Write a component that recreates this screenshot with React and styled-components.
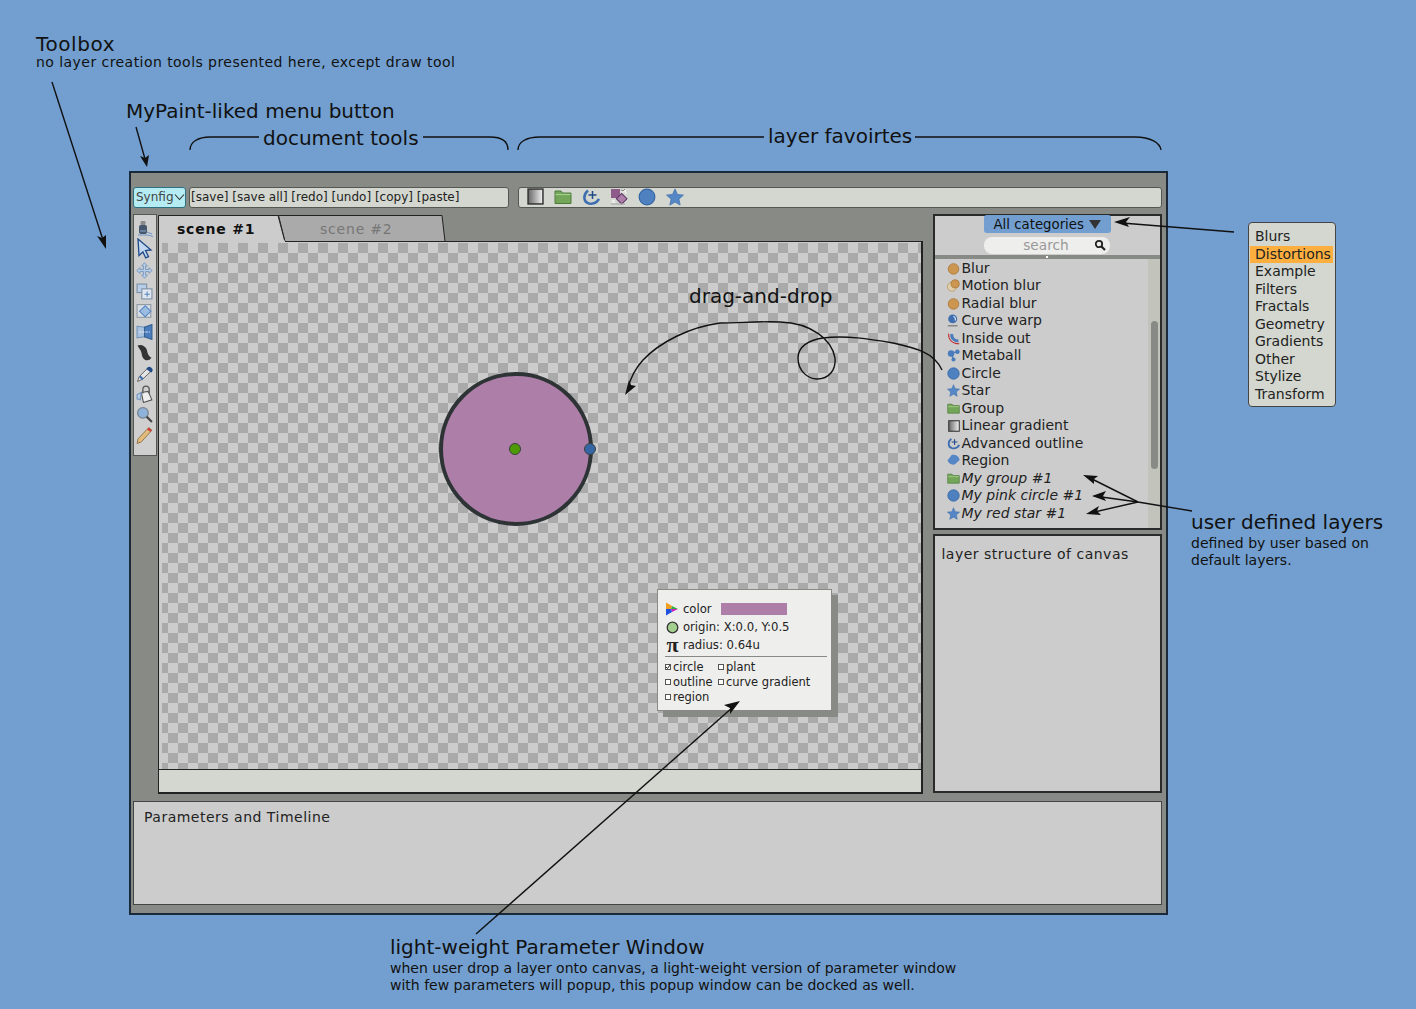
import React from 'react';
import styled, { createGlobalStyle } from 'styled-components';

const GlobalStyle = createGlobalStyle`
  html, body { margin: 0; padding: 0; background: #729fcf; }
  body { font-family: "DejaVu Sans", sans-serif; color: #111; }
  * { box-sizing: border-box; }
`;

const Page = styled.div`
  position: relative;
  width: 1416px;
  height: 1009px;
  padding: 171px 0 0 129px;
  background: #729fcf;
  overflow: hidden;
`;

const AppWindow = styled.div`
  width: 1039px;
  height: 744px;
  border: 2px solid #1a2a3a;
  background: #888a85;
  padding: 14px 4px 8px 2px;
  display: flex;
  flex-direction: column;
`;

const TopBar = styled.div`
  display: flex;
  height: 22px;
`;

const MenuButton = styled.div`
  width: 53px;
  height: 21px;
  border: 1px solid #2e6f80;
  border-radius: 3px;
  background: #b5ebf3;
  color: #444;
  font-size: 12px;
  display: flex;
  align-items: center;
  padding: 0 0 2px 2px;
  margin-right: 3px;
`;

const ToolStrip = styled.div`
  height: 21px;
  border: 1px solid #555753;
  border-radius: 3px;
  background: #d3d7cf;
  display: flex;
  align-items: center;
  width: ${p => p.$w}px;
  margin-right: ${p => p.$mr || 0}px;
  padding-left: ${p => p.$pl || 0}px;
  padding-bottom: 2px;
  gap: ${p => p.$gap || 0}px;
  font-size: 12px;
  color: #222;
`;

const FavSlot = styled.span`
  width: 18px;
  height: 18px;
  display: flex;
  align-items: center;
  justify-content: center;
`;

const Middle = styled.div`
  display: flex;
  margin-top: 5px;
  height: 580px;
`;

const ToolBox = styled.div`
  width: 24px;
  height: 242px;
  border: 1px solid #555753;
  background: #cfcfcf;
  display: flex;
  flex-direction: column;
  align-items: center;
  padding-top: 6px;
`;

const ToolSlot = styled.span`
  width: 18px;
  height: ${p => p.$h || 20.6}px;
  flex: none;
  display: flex;
  align-items: center;
  justify-content: center;
`;

const CanvasColumn = styled.div`
  width: 767px;
  margin-left: 1px;
  display: flex;
  flex-direction: column;
`;

const TabRow = styled.div`
  position: relative;
  height: 27px;
  margin-top: 1px;
  flex: none;
  z-index: 2;
`;

const TabShape = styled.svg`
  position: absolute;
  left: 0;
  top: 0;
`;

const TabLabel = styled.span`
  position: absolute;
  top: 6px;
  left: ${p => p.$left}px;
  font-size: 14px;
  letter-spacing: 0.8px;
  font-weight: ${p => (p.$active ? 700 : 400)};
  color: ${p => (p.$active ? '#111' : '#777')};
`;

const CanvasFrame = styled.div`
  position: relative;
  height: 529px;
  border: 1px solid #222;
  border-right-width: 2px;
  border-bottom: none;
  margin-top: -1px;
  background-color: #cccccc;
`;

const Checker = styled.div`
  position: absolute;
  left: 3px;
  top: 1px;
  right: 0;
  bottom: 0;
  background-color: #cccccc;
  background-image: conic-gradient(#aaaaaa 25%, #cccccc 0 50%, #aaaaaa 0 75%, #cccccc 0);
  background-size: 20px 20px;
  background-position: 6px 0;
`;

const Circle = styled.div`
  position: absolute;
  left: 280px;
  top: 130px;
  width: 154px;
  height: 154px;
  border-radius: 50%;
  background: #ad7fa8;
  border: 4.5px solid #2e3436;
`;

const Handle = styled.div`
  position: absolute;
  left: ${p => p.$left}px;
  top: 201px;
  width: 12px;
  height: 12px;
  border-radius: 50%;
  border: 1px solid #3a4040;
  background: ${p => p.$color};
`;

const Popup = styled.div`
  position: absolute;
  left: 498px;
  top: 347px;
  width: 175px;
  height: 122px;
  background: #eeeeec;
  border: 1px solid #888a85;
  box-shadow: 6px 6px 0 #888a85;
  padding: 10px 6px 0 7px;
  font-size: 11.65px;
  color: #222;
`;

const PopRow = styled.div`
  display: flex;
  align-items: center;
  height: 18px;
  gap: 3px;
`;

const PopIcon = styled.span`
  width: 15px;
  display: flex;
  justify-content: center;
  align-items: center;
  font-family: "Liberation Serif", serif;
  font-size: 22px;
  font-weight: 700;
  line-height: 1;
`;

const Swatch = styled.span`
  width: 66px;
  height: 12px;
  margin-left: 6px;
  background: #ad7fa8;
`;

const PopRule = styled.div`
  height: 1px;
  background: #888a85;
  margin: 2px 0 3px;
  width: 162px;
`;

const CheckGrid = styled.div`
  display: grid;
  grid-template-columns: 53px 1fr;
  grid-auto-rows: 14.7px;
  font-size: 11.5px;
`;

const CheckItem = styled.span`
  display: flex;
  align-items: center;
  white-space: nowrap;
`;

const CheckBox = styled.span`
  width: 6px;
  height: 6px;
  border: 1px solid #555;
  margin-right: 2px;
  background: #fff;
  flex: none;
  display: flex;
`;

const StatusBar = styled.div`
  height: 25px;
  flex: none;
  border: 1px solid #222;
  border-right-width: 2px;
  border-bottom-width: 2px;
  background: #d3d7cf;
`;

const SidePanels = styled.div`
  width: 229px;
  margin-left: 10px;
  display: flex;
  flex-direction: column;
  gap: 4px;
`;

const LayerPanel = styled.div`
  height: 316px;
  border: 2px solid #2a2a2a;
  background: #cccccc;
  display: flex;
  flex-direction: column;
  align-items: center;
  position: relative;
`;

const CategoryButton = styled.div`
  width: 127px;
  height: 18px;
  margin: -1px 1px 0 0;
  border-radius: 3px;
  background: #729fcf;
  font-size: 13.3px;
  display: flex;
  align-items: center;
  justify-content: center;
  gap: 5px;
  color: #111;
  flex: none;
`;

const Triangle = styled.span`
  width: 0;
  height: 0;
  border-left: 6px solid transparent;
  border-right: 6px solid transparent;
  border-top: 9px solid #333;
`;

const SearchBox = styled.div`
  width: 126px;
  height: 17px;
  margin: 4px 1px 0 0;
  border-radius: 8px;
  background: #eeeeec;
  color: #999;
  font-size: 13.7px;
  padding: 0 4px 1px 39px;
  display: flex;
  align-items: center;
  justify-content: space-between;
  flex: none;
`;

const Divider = styled.div`
  align-self: stretch;
  height: 4px;
  margin-top: 1px;
  background: #888a85;
  position: relative;
  flex: none;
  &::after {
    content: '';
    position: absolute;
    left: 111px;
    top: 1px;
    width: 2px;
    height: 2px;
    background: #fff;
  }
`;

const ListArea = styled.div`
  align-self: stretch;
  flex: 1;
  display: flex;
  min-height: 0;
`;

const LayerList = styled.ul`
  list-style: none;
  margin: 0;
  padding: 0 0 0 12px;
  flex: 1;
`;

const LayerItem = styled.li`
  height: 17.5px;
  display: flex;
  align-items: center;
  font-size: 14px;
  color: #222;
  font-style: ${p => (p.$custom ? 'italic' : 'normal')};
  white-space: nowrap;
`;

const LayerIcon = styled.span`
  width: 13px;
  margin-right: 1px;
  display: flex;
  justify-content: center;
  flex: none;
  padding-top: 1px;
`;

const ScrollTrack = styled.div`
  width: 12px;
  background: #c2c4bc;
  padding: 62px 2px 0 3px;
`;

const ScrollThumb = styled.div`
  width: 7px;
  height: 148px;
  border-radius: 4px;
  background: #888a85;
`;

const StructurePanel = styled.div`
  height: 259px;
  border: 2px solid #2a2a2a;
  background: #cccccc;
  padding: 10px 6px;
  font-size: 14px;
  letter-spacing: 0.5px;
  color: #222;
`;

const BottomPanel = styled.div`
  height: 104px;
  margin-top: 7px;
  width: 1029px;
  border: 1px solid #444;
  background: #cccccc;
  padding: 7px 10px;
  font-size: 14px;
  letter-spacing: 0.5px;
  color: #222;
`;

const Note = styled.div`
  position: absolute;
  left: ${p => p.$x}px;
  top: ${p => p.$y}px;
  font-size: ${p => p.$size}px;
  line-height: ${p => p.$lh || 1.2};
  letter-spacing: ${p => p.$ls || 0}px;
  color: #111;
  white-space: nowrap;
  z-index: 4;
`;

const CategoryMenu = styled.div`
  position: absolute;
  left: 1248px;
  top: 222px;
  width: 88px;
  height: 185px;
  border: 1px solid #444;
  border-radius: 4px;
  background: #d3d7cf;
  padding: 5px 2px 0 1px;
  font-size: 14px;
  color: #222;
`;

const CategoryRow = styled.div`
  height: 17.5px;
  line-height: 17px;
  padding-left: 5px;
  background: ${p => (p.$on ? '#fcaf3e' : 'transparent')};
`;

const ArrowLayer = styled.svg`
  position: absolute;
  left: 0;
  top: 0;
  z-index: 5;
  pointer-events: none;
`;

const Arrow = ({ d, head }) => (
  <g>
    <path d={d} fill="none" stroke="#111" strokeWidth="1.4" />
    {head && <path d={head} fill="#111" />}
  </g>
);

const Disc = ({ s = 13 }) => (
  <svg width={s} height={s} viewBox="0 0 16 16">
    <circle cx="8" cy="8" r="7" fill="#4f80bf" stroke="#3465a4" strokeWidth="1" />
  </svg>
);

const Orange = ({ double }) => (
  <svg width="13" height="13" viewBox="0 0 16 16">
    {double && <circle cx="6" cy="9.500" r="5.500" fill="#e0cfae" stroke="#b8955f" />}
    <circle cx={double ? 10 : 8} cy={double ? 6 : 8.500} r={double ? 5 : 6.500} fill="#cc9550" stroke="#a87a3a" />
  </svg>
);

const Star = ({ s = 13 }) => (
  <svg width={s} height={s} viewBox="0 0 16 16">
    <path d="M8 .8l2.200 4.900 5.300.6-4 3.600 1.100 5.300L8 12.500l-4.600 2.700 1.100-5.300-4-3.600 5.300-.6z" fill="#5586c6" stroke="#3a6ca8" strokeWidth=".6" />
  </svg>
);

const Folder = ({ w = 13, h = 11 }) => (
  <svg width={w} height={h} viewBox="0 0 18 15">
    <path d="M1 1.500h6l1.500 2H17v10.500H1z" fill="#73a658" stroke="#4e7a3c" />
    <path d="M1.500 5h15" stroke="#a3d08a" strokeWidth="1.200" />
  </svg>
);

const Gradient = ({ s = 12, id }) => (
  <svg width={s} height={s} viewBox="0 0 16 16">
    <defs>
      <linearGradient id={id}>
        <stop offset="0" stopColor="#666" />
        <stop offset="1" stopColor="#f4f4f4" />
      </linearGradient>
    </defs>
    <rect x="1" y="1" width="14" height="14" fill={`url(#${id})`} stroke="#333" strokeWidth="1.400" />
  </svg>
);

const Outline = ({ s = 13 }) => (
  <svg width={s} height={s} viewBox="0 0 18 18">
    <path d="M6 2.500C1 6.500 1 14 7 15.500c4 .8 8-1 10-4.500" fill="none" stroke="#3f6fb0" strokeWidth="2.600" />
    <path d="M10.500 3v8M6.500 7h8" stroke="#204a87" strokeWidth="1.500" />
  </svg>
);

const Warp = () => (
  <svg width="13" height="13" viewBox="0 0 16 16">
    <circle cx="7" cy="6" r="5.500" fill="#3f6fb0" />
    <path d="M8 3c2 1 3 3 2 5" stroke="#cfe0f4" strokeWidth="1.600" fill="none" />
    <path d="M1 14.500h12" stroke="#777" strokeWidth="1.500" />
  </svg>
);

const InsideOut = () => (
  <svg width="13" height="13" viewBox="0 0 16 16">
    <path d="M2 2c-.5 7 4 12.500 13 12.500" fill="none" stroke="#c03030" strokeWidth="1.300" />
    <path d="M6 2.500c-1 5 3 8.500 8 8.500" fill="none" stroke="#4a7cbd" strokeWidth="3.600" />
  </svg>
);

const Metaball = () => (
  <svg width="13" height="13" viewBox="0 0 16 16">
    <circle cx="5" cy="5.500" r="4" fill="#4a7cbd" />
    <circle cx="12.800" cy="3.500" r="2.800" fill="#4a7cbd" />
    <circle cx="8" cy="13" r="2.500" fill="#4a7cbd" />
    <path d="M5 5l7.500-1.500M5 5l3 8" stroke="#4a7cbd" strokeWidth="1.800" />
  </svg>
);

const Region = () => (
  <svg width="13" height="13" viewBox="0 0 16 16">
    <path d="M.5 8L6 1c5-.5 9 2 9.500 6.500l-6 5.500C5 14 2 11 .5 8z" fill="#5586c6" />
  </svg>
);

const Transform = () => (
  <svg width="18" height="18" viewBox="0 0 18 18">
    <rect x="1" y="1" width="9" height="9" fill="#8d5a8a" />
    <rect x="8" y="7" width="7.500" height="7.500" fill="#ad7fa8" stroke="#5c3566" transform="rotate(45 11.700 10.700)" />
    <path d="M11 3l2 1 2-2 1 4M2 12l3 3M2 15l3-3" fill="none" stroke="#eeeeec" strokeWidth="1.500" />
    <path d="M11 2l2 1 2-2" fill="none" stroke="#666" strokeWidth=".8" />
    <path d="M1 16h14" stroke="#aaa" strokeWidth="1.200" />
  </svg>
);

const Tool = {
  ink: (
    <svg width="18" height="18" viewBox="0 0 18 18">
      <rect x="3" y="5" width="8" height="9" rx="2" fill="#46566c" />
      <rect x="4.500" y="1" width="5" height="4" rx="1" fill="#8c8c8c" />
      <path d="M4 11h6" stroke="#7f9cc0" strokeWidth="1.200" />
      <path d="M2 15h10l5 1.500M11 12l5 2" stroke="#5586c6" strokeWidth=".8" fill="none" />
    </svg>
  ),
  arrow: (
    <svg width="17" height="21" viewBox="0 0 17 21">
      <path d="M2 1l13 11-5.500.6 3 6-2.800 1.300-2.800-6L3 17.500z" fill="#c3d8f0" stroke="#204a87" strokeWidth="1.300" />
    </svg>
  ),
  move: (
    <svg width="17" height="17" viewBox="0 0 16 16">
      <path d="M8 .7l2.700 3.100H9V7h3.200V5.300L15.300 8l-3.100 2.700V9H9v3.200h1.700L8 15.300l-2.700-3.100H7V9H3.800v1.700L.7 8l3.100-2.700V7H7V3.800H5.300z" fill="#b8cde6" stroke="#6f93bd" strokeWidth=".8" />
    </svg>
  ),
  scale: (
    <svg width="17" height="17" viewBox="0 0 16 16">
      <rect x="1" y="1" width="9" height="8" fill="#b8cde6" stroke="#7a8ea6" />
      <rect x="5.500" y="5.500" width="9.500" height="9.500" fill="#dfe6ee" stroke="#7a8ea6" />
      <path d="M8 10.500h5M10.500 8v5" stroke="#5586c6" />
    </svg>
  ),
  rotate: (
    <svg width="18" height="17" viewBox="0 0 17 16">
      <rect x="1" y="1.500" width="13" height="12" fill="#d8dde3" stroke="#8d97a3" />
      <rect x="5" y="4" width="7.500" height="7.500" fill="#9dbde0" stroke="#5586c6" transform="rotate(45 8.700 7.700)" />
    </svg>
  ),
  mirror: (
    <svg width="17" height="16" viewBox="0 0 16 15">
      <path d="M1 2l7 1v9l-7 1z" fill="#a9c2df" stroke="#6f93bd" />
      <path d="M15 .5L8 3v9l7 2.500z" fill="#4a7cbd" stroke="#35608f" />
      <path d="M3 7.500h10" stroke="#e8eef5" strokeDasharray="2 1" />
    </svg>
  ),
  feather: (
    <svg width="15" height="18" viewBox="0 0 14 16">
      <path d="M.5 1c3-1.500 7 0 8.500 3.500.6 1.500.5 3 1.500 5 .6 1.400 2 2.500 3 3-1.500 2.500-4.500 3-6.500 1.500C4 12 5 9 3.500 6 2.800 4.500 1.500 3 .5 1z" fill="#333" />
    </svg>
  ),
  brush: (
    <svg width="17" height="17" viewBox="0 0 16 16">
      <path d="M11 3l3 3-8 7.500-4.500 2L3 11z" fill="#e4e4e4" stroke="#555" strokeWidth=".8" />
      <path d="M10 3a3 3 0 0 1 5 3.500l-1 .5-4-3z" fill="#204a87" />
      <path d="M3.500 10.500l3 3" stroke="#3f6fb0" strokeWidth="2" />
    </svg>
  ),
  bucket: (
    <svg width="18" height="18" viewBox="0 0 17 17">
      <path d="M5 7l6.500-1 3.500 8-8 2.500z" fill="#eee" stroke="#555" />
      <path d="M6.500 8V4a3 3 0 0 1 6 0v4" fill="none" stroke="#555" strokeWidth="1.200" />
      <path d="M5 7L1 9v4l3 1z" fill="#b8cde6" stroke="#6f93bd" />
    </svg>
  ),
  zoom: (
    <svg width="17" height="17" viewBox="0 0 16 16">
      <circle cx="6.500" cy="6.500" r="5" fill="#8fb2da" stroke="#77838f" strokeWidth="1.200" />
      <path d="M10 10l5 5" stroke="#444" strokeWidth="2" />
    </svg>
  ),
  pencil: (
    <svg width="17" height="18" viewBox="0 0 16 17">
      <path d="M12 1.500l3 2.500L5 15l-4 1.500L2 12z" fill="#e3bb7c" stroke="#8a6a3a" strokeWidth=".8" />
      <path d="M12 1.500l3 2.500-1.500 1.700-3-2.500z" fill="#cc3c3c" />
    </svg>
  ),
};

const toolOrder = ['scale', 'rotate', 'mirror', 'feather', 'brush', 'bucket', 'zoom', 'pencil'];

const layers = [
  ['Blur', <Orange />],
  ['Motion blur', <Orange double />],
  ['Radial blur', <Orange />],
  ['Curve warp', <Warp />],
  ['Inside out', <InsideOut />],
  ['Metaball', <Metaball />],
  ['Circle', <Disc />],
  ['Star', <Star />],
  ['Group', <Folder />],
  ['Linear gradient', <Gradient id="lg-list" />],
  ['Advanced outline', <Outline />],
  ['Region', <Region />],
  ['My group #1', <Folder />, true],
  ['My pink circle #1', <Disc />, true],
  ['My red star #1', <Star />, true],
];

const categories = ['Blurs', 'Distortions', 'Example', 'Filters', 'Fractals', 'Geometry', 'Gradients', 'Other', 'Stylize', 'Transform'];

const checks = [
  ['circle', true],
  ['plant'],
  ['outline'],
  ['curve gradient'],
  ['region'],
];

export default function App() {
  return (
    <Page>
      <GlobalStyle />

      <Note $x={36} $y={32} $size={20} $ls={0.6}>Toolbox</Note>
      <Note $x={36} $y={54} $size={14} $ls={0.45}>no layer creation tools presented here, except draw tool</Note>
      <Note $x={126} $y={99} $size={20}>MyPaint-liked menu button</Note>
      <Note $x={263} $y={126} $size={20}>document tools</Note>
      <Note $x={768} $y={124} $size={20}>layer favoirtes</Note>
      <Note $x={689} $y={284} $size={20}>drag-and-drop</Note>
      <Note $x={1191} $y={510} $size={20}>user defined layers</Note>
      <Note $x={1191} $y={535} $size={14} $lh={1.22}>defined by user based on<br />default layers.</Note>
      <Note $x={390} $y={935} $size={20}>light-weight Parameter Window</Note>
      <Note $x={390} $y={960} $size={14} $lh={1.22}>
        when user drop a layer onto canvas, a light-weight version of parameter window<br />
        with few parameters will popup, this popup window can be docked as well.
      </Note>

      <AppWindow>
        <TopBar>
          <MenuButton>
            Synfig
            <svg width="11" height="8" viewBox="0 0 11 8"><path d="M1 1.500l4.500 5 4.500-5" fill="none" stroke="#333" strokeWidth="1.100" /></svg>
          </MenuButton>
          <ToolStrip $w={320} $mr={9} $pl={1}>[save] [save all] [redo] [undo] [copy] [paste]</ToolStrip>
          <ToolStrip $w={644} $pl={7} $gap={10}>
            <FavSlot><Gradient s={17} id="lg-fav" /></FavSlot>
            <FavSlot><Folder w={19} h={16} /></FavSlot>
            <FavSlot><Outline s={18} /></FavSlot>
            <FavSlot><Transform /></FavSlot>
            <FavSlot><Disc s={18} /></FavSlot>
            <FavSlot><Star s={18} /></FavSlot>
          </ToolStrip>
        </TopBar>

        <Middle>
          <ToolBox>
            <ToolSlot $h={16}>{Tool.ink}</ToolSlot>
            <ToolSlot $h={22}>{Tool.arrow}</ToolSlot>
            <ToolSlot $h={22}>{Tool.move}</ToolSlot>
            {toolOrder.map(t => <ToolSlot key={t}>{Tool[t]}</ToolSlot>)}
          </ToolBox>

          <CanvasColumn>
            <TabRow>
              <TabShape width="290" height="27" viewBox="0 0 290 27">
                <path d="M120.500 .500H284l3 26H127z" fill="#aaaaaa" stroke="#222" />
                <path d="M.500 27V.500H120l7 26.500" fill="#cccccc" stroke="#222" />
                <path d="M1 26.500h126" stroke="#cccccc" strokeWidth="2" />
              </TabShape>
              <TabLabel $left={19} $active>scene #1</TabLabel>
              <TabLabel $left={162}>scene #2</TabLabel>
            </TabRow>
            <CanvasFrame>
              <Checker />
              <Circle />
              <Handle $left={350} $color="#4e9a06" />
              <Handle $left={425} $color="#3465a4" />
              <Popup>
                <PopRow>
                  <PopIcon>
                    <svg width="14" height="14" viewBox="0 0 14 14">
                      <path d="M1 .5L7 4 6 7 1 7z" fill="#f0a020" />
                      <path d="M7 4l6 3-7 0z" fill="#2fb03c" />
                      <path d="M13 7L6 7 7 10z" fill="#d020c0" />
                      <path d="M1 7h5l1 3-6 3.500z" fill="#2050e0" />
                    </svg>
                  </PopIcon>
                  color
                  <Swatch />
                </PopRow>
                <PopRow>
                  <PopIcon>
                    <svg width="13" height="13" viewBox="0 0 13 13">
                      <circle cx="6.500" cy="6.500" r="5.300" fill="#a3cf8f" stroke="#333" strokeWidth="1.300" />
                    </svg>
                  </PopIcon>
                  origin: X:0.0, Y:0.5
                </PopRow>
                <PopRow>
                  <PopIcon>π</PopIcon>
                  radius: 0.64u
                </PopRow>
                <PopRule />
                <CheckGrid>
                  {checks.map(([label, on]) => (
                    <CheckItem key={label}>
                      <CheckBox>
                        {on && <svg width="4" height="4" viewBox="0 0 4 4"><path d="M0 2l1.500 1.500L4 0" fill="none" stroke="#222" strokeWidth="1" /></svg>}
                      </CheckBox>
                      {label}
                    </CheckItem>
                  ))}
                </CheckGrid>
              </Popup>
            </CanvasFrame>
            <StatusBar />
          </CanvasColumn>

          <SidePanels>
            <LayerPanel>
              <CategoryButton>All categories <Triangle /></CategoryButton>
              <SearchBox>
                search
                <svg width="12" height="12" viewBox="0 0 12 12">
                  <circle cx="5" cy="5" r="3.200" fill="none" stroke="#222" strokeWidth="1.800" />
                  <path d="M7.500 7.500l3.500 3.500" stroke="#222" strokeWidth="2.200" />
                </svg>
              </SearchBox>
              <Divider />
              <ListArea>
                <LayerList>
                  {layers.map(([name, icon, custom]) => (
                    <LayerItem key={name} $custom={custom}>
                      <LayerIcon>{icon}</LayerIcon>
                      {name}
                    </LayerItem>
                  ))}
                </LayerList>
                <ScrollTrack><ScrollThumb /></ScrollTrack>
              </ListArea>
            </LayerPanel>
            <StructurePanel>layer structure of canvas</StructurePanel>
          </SidePanels>
        </Middle>

        <BottomPanel>Parameters and Timeline</BottomPanel>
      </AppWindow>

      <CategoryMenu>
        {categories.map(c => <CategoryRow key={c} $on={c === 'Distortions'}>{c}</CategoryRow>)}
      </CategoryMenu>

      <ArrowLayer width="1416" height="1009" viewBox="0 0 1416 1009">
        <Arrow d="M52 82L103 240" head="M106 249l-9-13 5 2 4-3z" />
        <Arrow d="M136 127l9 32" head="M147 167l-7-11 5 2 4-3z" />
        <Arrow d="M259 137H210c-12 0-20 5-20 13" />
        <Arrow d="M423 137H490c12 0 18 5 18 13" />
        <Arrow d="M764 137H540c-14 0-22 5-22 13" />
        <Arrow d="M915 137H1135c16 0 25 6 26 13" />
        <Arrow d="M1234 232l-112-9" head="M1114 222l16-5-4 5 3 5z" />
        <Arrow
          d="M942 370C934 352 915 348 893 343C870 339 845 335 823 338C808 340 798 347 798 358C798 371 808 379 817 379C829 379 836 370 835 358C832 340 812 323 780 322C760 321 740 323 720 323C690 327 660 342 643 360C634 370 630 380 628 388"
          head="M625 395L629 380 631 385 636 386z"
        />
        <Arrow d="M1192 511l-54-9-48-24" head="M1083 475l15 1-4 3 0 5z" />
        <Arrow d="M1138 502l-44-6" head="M1092 496l14-5-3 5 3 5z" />
        <Arrow d="M1138 502l-48 11" head="M1086 514l13-8-2 5 4 4z" />
        <Arrow d="M476 934L733 707" head="M740 701l-16 4 6 3 0 6z" />
      </ArrowLayer>
    </Page>
  );
}
